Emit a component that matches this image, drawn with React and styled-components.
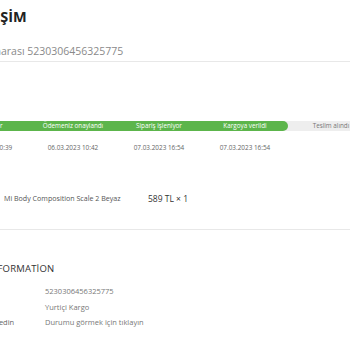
import React from "react";
import styled, { createGlobalStyle } from "styled-components";

const GlobalStyle = createGlobalStyle`
	html, body {
		margin: 0;
		padding: 0;
		background: #ffffff;
		overflow: hidden;
	}
	body {
		font-family: "Open Sans", "Liberation Sans", sans-serif;
		color: #333333;
	}
`;

const steps = [
	{ label: "Bekleniyor", date: "06.03.2023 10:39", done: true },
	{ label: "Ödemeniz onaylandı", date: "06.03.2023 10:42", done: true },
	{ label: "Sipariş işleniyor", date: "07.03.2023 16:54", done: true },
	{ label: "Kargoya verildi", date: "07.03.2023 16:54", done: true },
	{ label: "Teslim alındı", date: "", done: false },
];

const info = [
	{ label: "Sipariş no", value: "5230306456325775" },
	{ label: "Kargo şirketi", value: "Yurtiçi Kargo" },
	{ label: "Kargonuzu takip edin", value: "Durumu görmek için tıklayın" },
];

export default function App() {
	return (
		<>
			<GlobalStyle />
			<Viewport>
				<Page>
					<Header>
						<Title>SİPARİŞİM</Title>
						<OrderNo>Sipariş numarası 5230306456325775</OrderNo>
					</Header>

					<Progress>
						<Track>
							{steps.map((s) => (
								<Step key={s.label} $done={s.done}>
									{s.label}
								</Step>
							))}
						</Track>
						<Dates>
							{steps.map((s) => (
								<DateCell key={s.label}>{s.date}</DateCell>
							))}
						</Dates>
					</Progress>

					<Product>
						<ProductThumb />
						<ProductName>Mi Body Composition Scale 2 Beyaz</ProductName>
						<Price>589 TL × 1</Price>
					</Product>

					<Info>
						<InfoTitle>SHIPPING INFORMATİON</InfoTitle>
						<InfoList>
							{info.map((row) => (
								<InfoRow key={row.label}>
									<InfoLabel>{row.label}</InfoLabel>
									<InfoValue>{row.value}</InfoValue>
								</InfoRow>
							))}
						</InfoList>
					</Info>
				</Page>
			</Viewport>
		</>
	);
}

const Viewport = styled.div`
	width: 350px;
	height: 350px;
	overflow: hidden;
`;

const Page = styled.div`
	width: 440px;
	margin-left: -56px;
	display: flex;
	flex-direction: column;
`;

const Header = styled.div`
	padding-top: 5px;
	border-bottom: 1px solid #e8e8e8;
	height: 56px;
	display: flex;
	flex-direction: column;
`;

const Title = styled.h1`
	margin: 0;
	margin-left: 10px;
	font-size: 14.5px;
	font-weight: 700;
	color: #222222;
	line-height: 24px;
`;

const OrderNo = styled.div`
	margin-top: 15px;
	margin-left: -1px;
	font-size: 10.5px;
	font-weight: 400;
	color: #8a8a8a;
	line-height: 14px;
`;

const Progress = styled.div`
	padding-top: 59px;
	display: flex;
	flex-direction: column;
`;

const Track = styled.div`
	display: flex;
	background: #eeeeee;
	height: 10px;
	width: 440px;
`;

const Step = styled.div`
	width: 86px;
	flex: none;
	display: flex;
	align-items: center;
	justify-content: center;
	font-size: 6.3px;
	line-height: 10px;
	white-space: nowrap;
	color: ${(p) => (p.$done ? "#ffffff" : "#777777")};
	background: ${(p) => (p.$done ? "#5cb54b" : "transparent")};
	&:nth-child(4) {
		border-radius: 0 5px 5px 0;
	}
`;

const Dates = styled.div`
	display: flex;
	margin-top: 12px;
`;

const DateCell = styled.div`
	width: 86px;
	flex: none;
	text-align: center;
	font-size: 6.4px;
	line-height: 10px;
	color: #666666;
	white-space: nowrap;
`;

const Product = styled.div`
	display: flex;
	align-items: center;
	margin-top: 35px;
	height: 20px;
	border-bottom: 1px solid #e8e8e8;
	padding-bottom: 21px;
`;

const ProductThumb = styled.div`
	width: 40px;
	height: 20px;
	flex: none;
	margin-left: 14px;
	margin-right: 6px;
`;

const ProductName = styled.div`
	width: 144px;
	font-size: 7.1px;
	color: #555555;
	white-space: nowrap;
`;

const Price = styled.div`
	font-size: 8.5px;
	color: #333333;
	white-space: nowrap;
`;

const Info = styled.div`
	padding-top: 33px;
	display: flex;
	flex-direction: column;
`;

const InfoTitle = styled.div`
	margin-left: -4px;
	font-size: 9.5px;
	font-weight: 500;
	letter-spacing: 0.2px;
	color: #333333;
	line-height: 12px;
`;

const InfoList = styled.div`
	margin-top: 11px;
	display: flex;
	flex-direction: column;
	gap: 5.5px;
`;

const InfoRow = styled.div`
	display: flex;
	align-items: center;
	height: 10px;
`;

const InfoLabel = styled.div`
	width: 105px;
	flex: none;
	margin-left: -4px;
	font-size: 7.5px;
	color: #666666;
	white-space: nowrap;
`;

const InfoValue = styled.div`
	font-size: 7.5px;
	color: #777777;
	white-space: nowrap;
`;
